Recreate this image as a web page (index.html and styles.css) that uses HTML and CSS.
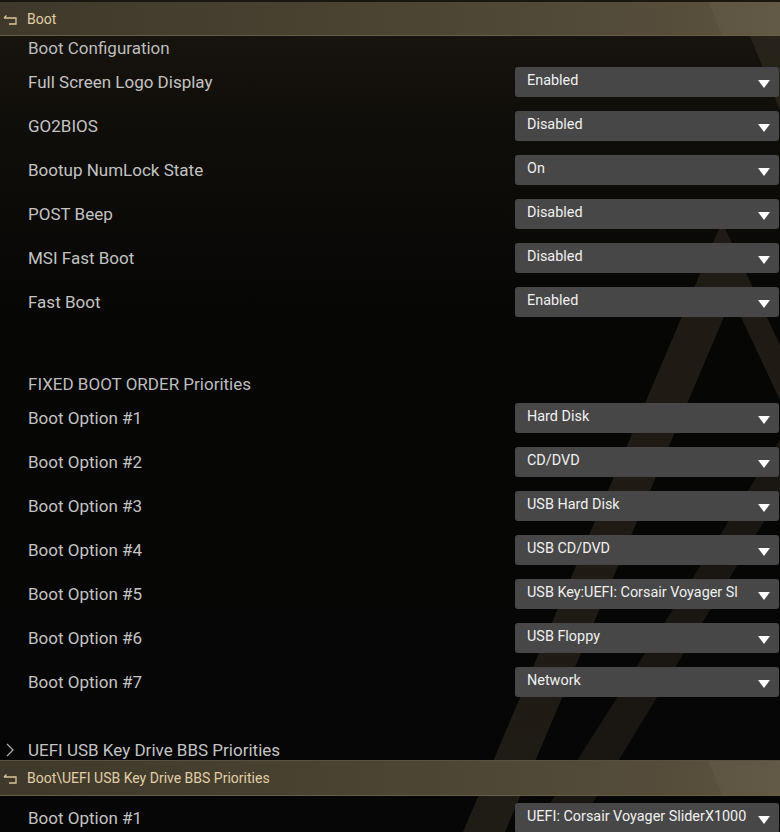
FILE: index.html
```html
<!DOCTYPE html>
<html lang="en">
<head>
    <meta charset="UTF-8">
    <meta name="viewport" content="width=device-width, initial-scale=1.0">
    <title>Boot | BIOS Setup</title>
    <link rel="stylesheet" href="styles.css">
</head>
<body>
    <div class="screen">
        <!-- decorative stripes behind the menu -->
        <svg class="bg-stripes" width="780" height="832" viewBox="0 0 780 832">
            <polygon points="750,36 780,36 780,110" fill="#3a3426" opacity="0.5"/>
            <polygon points="722,222 780,345 780,400 732,298 505,832 463,832" fill="#2c271d" opacity="0.65"/>
            <polygon points="780,440 780,495 575,832 532,832" fill="#2c271d" opacity="0.55"/>
        </svg>

        <div class="crumb">
            <svg class="back-icon" width="16" height="12" viewBox="0 0 16 12">
                <path d="M2 5 L4.5 2.5 M2 5 H14 V11 H7" fill="none" stroke="#d9c69b" stroke-width="1.3"/>
            </svg>
            <span>Boot</span>
        </div>

        <div class="group-title">Boot Configuration</div>
        <div class="row"><span class="label">Full Screen Logo Display</span><div class="select"><span>Enabled</span><i class="caret"></i></div></div>
        <div class="row"><span class="label">GO2BIOS</span><div class="select"><span>Disabled</span><i class="caret"></i></div></div>
        <div class="row"><span class="label">Bootup NumLock State</span><div class="select"><span>On</span><i class="caret"></i></div></div>
        <div class="row"><span class="label">POST Beep</span><div class="select"><span>Disabled</span><i class="caret"></i></div></div>
        <div class="row"><span class="label">MSI Fast Boot</span><div class="select"><span>Disabled</span><i class="caret"></i></div></div>
        <div class="row"><span class="label">Fast Boot</span><div class="select"><span>Enabled</span><i class="caret"></i></div></div>

        <div class="group-title spaced">FIXED BOOT ORDER Priorities</div>
        <div class="row"><span class="label">Boot Option #1</span><div class="select"><span>Hard Disk</span><i class="caret"></i></div></div>
        <div class="row"><span class="label">Boot Option #2</span><div class="select"><span>CD/DVD</span><i class="caret"></i></div></div>
        <div class="row"><span class="label">Boot Option #3</span><div class="select"><span>USB Hard Disk</span><i class="caret"></i></div></div>
        <div class="row"><span class="label">Boot Option #4</span><div class="select"><span>USB CD/DVD</span><i class="caret"></i></div></div>
        <div class="row"><span class="label">Boot Option #5</span><div class="select"><span>USB Key:UEFI: Corsair Voyager Sl</span><i class="caret"></i></div></div>
        <div class="row"><span class="label">Boot Option #6</span><div class="select"><span>USB Floppy</span><i class="caret"></i></div></div>
        <div class="row"><span class="label">Boot Option #7</span><div class="select"><span>Network</span><i class="caret"></i></div></div>

        <div class="submenu">
            <svg class="chevron" width="10" height="16" viewBox="0 0 10 16">
                <path d="M2 2 L8 8 L2 14" fill="none" stroke="#a9a9a9" stroke-width="1.3"/>
            </svg>
            <span>UEFI USB Key Drive BBS Priorities</span>
        </div>

        <div class="crumb sub">
            <svg class="back-icon" width="16" height="12" viewBox="0 0 16 12">
                <path d="M2 5 L4.5 2.5 M2 5 H14 V11 H7" fill="none" stroke="#d9c69b" stroke-width="1.3"/>
            </svg>
            <span>Boot\UEFI USB Key Drive BBS Priorities</span>
        </div>
        <div class="row"><span class="label">Boot Option #1</span><div class="select"><span>UEFI: Corsair Voyager SliderX1000</span><i class="caret"></i></div></div>
    </div>
</body>
</html>
```

FILE: styles.css
```css
body {
    margin: 0;
    background-color: #050505;
    font-family: Roboto, "Liberation Sans", sans-serif;
    overflow: hidden;
}

.screen {
    position: relative;
    width: 780px;
    height: 832px;
    overflow: hidden;
    padding-top: 2px;
    box-sizing: border-box;
    background: linear-gradient(to bottom, #1a1610 0, #100e0a 120px, #060605 320px, #060606 100%);
}

.bg-stripes {
    position: absolute;
    top: 0;
    left: 0;
    z-index: 0;
}

.crumb,
.group-title,
.row,
.submenu {
    position: relative;
    z-index: 1;
}

.crumb {
    display: flex;
    align-items: center;
    height: 34px;
    box-sizing: border-box;
    border-bottom: 1px solid #675d47;
    background:
        linear-gradient(68deg, transparent 91%, rgba(255, 240, 200, 0.035) 91%),
        linear-gradient(to right, #3f392b, #4a4332 45%, #554d3a 85%, #5c5441);
    color: #e0cfa6;
    font-size: 14px;
}

.crumb.sub {
    height: 36px;
    border-top: 1px solid #5a5140;
}

.back-icon {
    margin-left: 2px;
    margin-right: 9px;
}

.group-title {
    height: 24px;
    line-height: 24px;
    padding-left: 28px;
    color: #bdbdbd;
    font-size: 17px;
}

.group-title.spaced {
    margin-top: 48px;
}

.row {
    display: flex;
    align-items: center;
    justify-content: space-between;
    height: 44px;
    padding-left: 28px;
    padding-right: 1px;
}

.label {
    color: #c3c3c3;
    font-size: 17px;
}

.select {
    display: flex;
    align-items: center;
    justify-content: space-between;
    width: 264px;
    height: 30px;
    box-sizing: border-box;
    padding: 0 9px 0 12px;
    background-color: #474747;
    border-radius: 3px;
    color: #f0f0f0;
    font-size: 14.4px;
}

.select span {
    margin-top: -3px;
}

.caret {
    width: 0;
    height: 0;
    margin-top: 3px;
    border-left: 6px solid transparent;
    border-right: 6px solid transparent;
    border-top: 8px solid #ffffff;
}

.submenu {
    display: flex;
    align-items: center;
    height: 20px;
    margin-top: 35px;
    padding-top: 1px;
    color: #c3c3c3;
    font-size: 17px;
}

.chevron {
    margin-left: 5px;
    margin-right: 13px;
}
```
